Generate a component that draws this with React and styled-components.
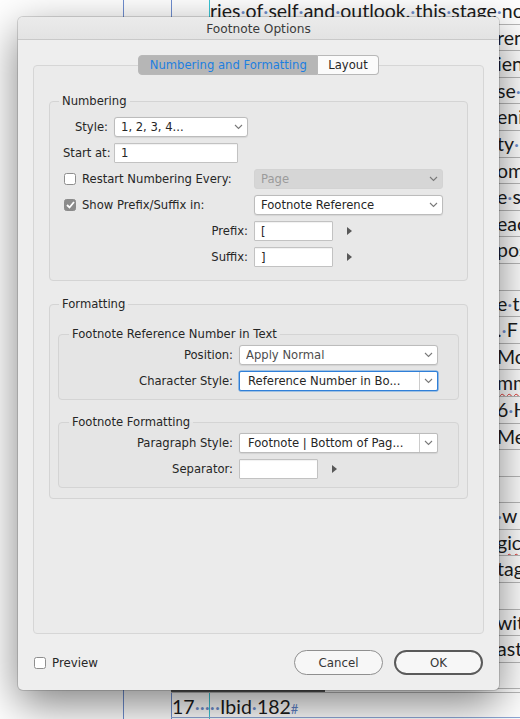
import styled, { createGlobalStyle } from "styled-components";

const GlobalStyle = createGlobalStyle`
  html, body {
    margin: 0;
    padding: 0;
    background: #ffffff;
  }
  body {
    width: 520px;
    height: 719px;
    overflow: hidden;
  }
  * {
    box-sizing: border-box;
  }
`;

const ui = `"DejaVu Sans", "Liberation Sans", sans-serif`;

const Canvas = styled.div`
  position: relative;
  width: 520px;
  height: 719px;
  overflow: hidden;
  background: #ffffff;
`;

const Guide = styled.div`
  position: absolute;
  top: 0;
  bottom: 0;
  left: ${(p) => p.$x}px;
  width: 1px;
  background: ${(p) => p.$color};
`;

const Page = styled.div`
  position: absolute;
  left: 171px;
  top: -2px;
  right: 0;
  bottom: 0;
  display: flex;
  flex-direction: column;
  font-family: Lato, "Noto Sans", sans-serif;
  font-size: 19.5px;
  color: #1c1c1c;
`;

const DocLine = styled.div`
  height: 26.6px;
  line-height: 25px;
  padding-left: ${(p) => p.$lead}px;
  white-space: nowrap;
  overflow: hidden;
  border-bottom: 1px solid #b9b9b9;
`;

const Dot = styled.span`
  color: #6f8fcf;
`;

const Squiggle = styled.span`
  text-decoration: underline wavy #e0332e;
  text-decoration-thickness: 1px;
  text-underline-offset: 3px;
`;

const FootRule = styled.div`
  width: 154px;
  height: 2px;
  margin-top: 1px;
  background: #555555;
`;

const FootLine = styled.div`
  height: 26px;
  line-height: 28px;
  padding-left: 1px;
  white-space: nowrap;
  border-top: 1px solid #b9b9b9;
  border-bottom: 1px solid #8ea7d6;
`;

const Mark = styled.span`
  color: #5f83c9;
  font-size: 13px;
`;

const withDots = (text) =>
  text.split(" ").map((w, i) => (
    <span key={i}>
      {i > 0 && <Dot>·</Dot>}
      {w}
    </span>
  ));

const docLines = [
  { lead: 39, text: "ries of self and outlook, this stage now" },
  { text: "rent" },
  { text: "ient" },
  { text: "se w" },
  { text: "ening" },
  { text: "ty ." },
  { text: "om" },
  { text: "e s" },
  { text: "each" },
  { text: "pos" },
  { text: "" },
  { text: "e t" },
  { text: ". F" },
  { text: "Mo" },
  { text: "mm", wavy: true },
  { text: "6 H" },
  { text: "Me" },
  { text: "" },
  { text: "" },
  { text: " w" },
  { text: "gic", wavy: true },
  { text: "tag" },
  { text: "" },
  { text: "with" },
  { text: "ast" },
  { text: "" },
];

/* ---------- dialog ---------- */

const Dialog = styled.div`
  position: absolute;
  left: 18px;
  top: 17px;
  width: 481px;
  height: 673px;
  display: flex;
  flex-direction: column;
  background: #eeeeee;
  border-radius: 5px;
  overflow: hidden;
  box-shadow: 0 14px 44px rgba(0, 0, 0, 0.5), 0 0 0 1px rgba(0, 0, 0, 0.14);
  font-family: ${ui};
  font-size: 11.6px;
  color: #262626;
`;

const TitleBar = styled.div`
  height: 23px;
  flex: none;
  display: flex;
  align-items: center;
  justify-content: center;
  padding-top: 2px;
  background: linear-gradient(#ebebeb, #e3e3e3);
  border-bottom: 1px solid #c9c9c9;
  font-size: 12.2px;
  color: #3a3a3a;
`;

const Body = styled.div`
  flex: 1;
  display: flex;
  flex-direction: column;
  padding: 25px 15px 0;
`;

const TabBox = styled.div`
  height: 569px;
  display: flex;
  flex-direction: column;
  padding: 0 15px;
  border: 1px solid #d6d6d6;
  border-radius: 4px;
  background: #ebebeb;
`;

const Tabs = styled.div`
  align-self: center;
  display: flex;
  margin-top: -11px;
  height: 20px;
`;

const Tab = styled.div`
  display: flex;
  align-items: center;
  padding: 0 ${(p) => (p.$active ? 10.5 : 10)}px;
  border: 1px solid #b8b8b8;
  border-left-width: ${(p) => (p.$active ? 1 : 0)}px;
  border-radius: ${(p) => (p.$active ? "4px 0 0 4px" : "0 4px 4px 0")};
  background: ${(p) => (p.$active ? "#b6b6b6" : "#fbfbfb")};
  color: ${(p) => (p.$active ? "#1d7fe0" : "#262626")};
`;

const Group = styled.fieldset`
  margin: ${(p) => p.$top || 0}px 0 0;
  padding: ${(p) => p.$pad};
  border: 1px solid #d4d4d4;
  border-radius: 4px;
  background: rgba(0, 0, 0, 0.012);
  display: flex;
  flex-direction: column;
  gap: 6px;
  min-width: 0;
`;

const Legend = styled.legend`
  margin-left: ${(p) => p.$indent ?? 9}px;
  padding: 0 3px;
  line-height: 16px;
  color: #262626;
`;

const Row = styled.div`
  display: flex;
  align-items: center;
  height: 20px;
  gap: 6px;
  padding-left: ${(p) => p.$indent || 0}px;
`;

const Label = styled.div`
  width: ${(p) => p.$w}px;
  flex: none;
  text-align: right;
  white-space: nowrap;
`;

const CheckLabel = styled.label`
  width: ${(p) => p.$w}px;
  flex: none;
  display: flex;
  align-items: center;
  gap: 6px;
  padding-left: 1px;
  white-space: nowrap;
`;

const Box = styled.span`
  width: 12px;
  height: 12px;
  flex: none;
  display: flex;
  align-items: center;
  justify-content: center;
  border: 1px solid ${(p) => (p.$on ? "#8b8b8b" : "#8e8e8e")};
  border-radius: 2.5px;
  background: ${(p) => (p.$on ? "#8b8b8b" : "#ffffff")};
`;

const Field = styled.div`
  width: ${(p) => p.$w}px;
  height: 20px;
  flex: none;
  display: flex;
  align-items: center;
  padding: 0 0 0 6px;
  border: 1px solid ${(p) => (p.$disabled ? "#d3d3d3" : "#bcbcbc")};
  border-radius: 3px;
  background: ${(p) => (p.$disabled ? "#d6d6d6" : "#ffffff")};
  color: ${(p) => (p.$disabled ? "#9b9b9b" : p.$muted ? "#4d4d4d" : "#262626")};
  box-shadow: ${(p) => (p.$disabled ? "none" : "0 0.5px 1px rgba(0,0,0,0.08)")};
  white-space: nowrap;
`;

const Input = styled(Field)`
  border-radius: 1px;
  border-color: #c2c2c2;
  box-shadow: inset 0 1px 1px rgba(0, 0, 0, 0.06);
`;

const FieldText = styled.span`
  flex: 1;
  overflow: hidden;
`;

const Chevron = styled.span`
  width: 18px;
  align-self: stretch;
  display: flex;
  align-items: center;
  justify-content: center;
  border-left: 1px solid ${(p) => (p.$split ? "#cccccc" : "transparent")};
`;

const Combo = styled(Field)`
  border-color: ${(p) => (p.$focus ? "#2f7fd8" : "#bcbcbc")};
  box-shadow: ${(p) => (p.$focus ? "0 0 0 0.6px #5b9be0" : "0 0.5px 1px rgba(0,0,0,0.08)")};
  border-radius: 2px;
  padding-left: 8px;
`;

const Arrow = styled.span`
  display: flex;
  margin-left: 8px;
`;

const Footer = styled.div`
  display: flex;
  align-items: center;
  padding: 16px 1px 0;
  gap: 11px;
`;

const Preview = styled.label`
  display: flex;
  align-items: center;
  gap: 6px;
  margin-right: auto;
  font-size: 11.8px;
`;

const Button = styled.button`
  width: 89px;
  height: 25px;
  border: ${(p) => (p.$default ? "2px solid #5a5a5a" : "1px solid #8f8f8f")};
  border-radius: 13px;
  background: #f7f7f7;
  font-family: ${ui};
  font-size: 11.8px;
  color: #363636;
  padding: 0;
`;

const ChevronIcon = () => (
  <svg width="9" height="6" viewBox="0 0 9 6">
    <polyline points="1,1 4.5,4.5 8,1" fill="none" stroke="#7a7a7a" strokeWidth="1.1" />
  </svg>
);

const TriangleIcon = () => (
  <svg width="5" height="8" viewBox="0 0 5 8">
    <polygon points="0,0 5,4 0,8" fill="#585858" />
  </svg>
);

const CheckIcon = () => (
  <svg width="9" height="8" viewBox="0 0 9 8">
    <polyline points="1,4 3.5,6.5 8,1" fill="none" stroke="#ffffff" strokeWidth="1.8" />
  </svg>
);

function Select({ w, value, disabled, muted }) {
  return (
    <Field $w={w} $disabled={disabled} $muted={muted}>
      <FieldText>{value}</FieldText>
      <Chevron>
        <ChevronIcon />
      </Chevron>
    </Field>
  );
}

function ComboBox({ w, value, focus }) {
  return (
    <Combo $w={w} $focus={focus}>
      <FieldText>{value}</FieldText>
      <Chevron $split>
        <ChevronIcon />
      </Chevron>
    </Combo>
  );
}

function Check({ on }) {
  return <Box $on={on}>{on && <CheckIcon />}</Box>;
}

export default function App() {
  return (
    <Canvas>
      <GlobalStyle />
      <Guide $x={123} $color="#6f8ed0" />
      <Guide $x={171} $color="#6f8ed0" />
      <Guide $x={209} $color="#39c6d6" />

      <Page>
        {docLines.map((line, i) => (
          <DocLine key={i} $lead={line.lead ?? 326}>
            {line.wavy ? <Squiggle>{line.text}</Squiggle> : withDots(line.text)}
          </DocLine>
        ))}
        <FootRule />
        <FootLine>
          17<Dot>·····</Dot>
          {withDots("Ibid 182")}
          <Mark>#</Mark>
        </FootLine>
      </Page>

      <Dialog>
        <TitleBar>Footnote Options</TitleBar>
        <Body>
          <TabBox>
            <Tabs>
              <Tab $active>Numbering and Formatting</Tab>
              <Tab>Layout</Tab>
            </Tabs>

            <Group $top={18} $pad="8px 0 13px">
              <Legend>Numbering</Legend>
              <Row $indent={13}>
                <Label $w={45}>Style:</Label>
                <Select w={134} value="1, 2, 3, 4..." />
              </Row>
              <Row $indent={13}>
                <Label $w={45}>Start at:</Label>
                <Input $w={124}>1</Input>
              </Row>
              <Row $indent={13}>
                <CheckLabel $w={185}>
                  <Check />
                  Restart Numbering Every:
                </CheckLabel>
                <Select w={189} value="Page" disabled />
              </Row>
              <Row $indent={13}>
                <CheckLabel $w={185}>
                  <Check on />
                  Show Prefix/Suffix in:
                </CheckLabel>
                <Select w={189} value="Footnote Reference" />
              </Row>
              <Row $indent={13}>
                <Label $w={185}>Prefix:</Label>
                <Input $w={79}>[</Input>
                <Arrow>
                  <TriangleIcon />
                </Arrow>
              </Row>
              <Row $indent={13}>
                <Label $w={185}>Suffix:</Label>
                <Input $w={79}>]</Input>
                <Arrow>
                  <TriangleIcon />
                </Arrow>
              </Row>
            </Group>

            <Group $top={15} $pad="14px 8px 10px">
              <Legend $indent={1}>Formatting</Legend>
              <Group $pad="3px 0 8px">
                <Legend $indent={10}>Footnote Reference Number in Text</Legend>
                <Row>
                  <Label $w={174}>Position:</Label>
                  <Select w={199} value="Apply Normal" muted />
                </Row>
                <Row>
                  <Label $w={174}>Character Style:</Label>
                  <ComboBox w={199} value="Reference Number in Bo..." focus />
                </Row>
              </Group>
              <Group $top={8} $pad="3px 0 8px">
                <Legend $indent={10}>Footnote Formatting</Legend>
                <Row>
                  <Label $w={174}>Paragraph Style:</Label>
                  <ComboBox w={199} value="Footnote | Bottom of Pag..." />
                </Row>
                <Row>
                  <Label $w={174}>Separator:</Label>
                  <Input $w={79} />
                  <Arrow>
                    <TriangleIcon />
                  </Arrow>
                </Row>
              </Group>
            </Group>
          </TabBox>

          <Footer>
            <Preview>
              <Check />
              Preview
            </Preview>
            <Button>Cancel</Button>
            <Button $default>OK</Button>
          </Footer>
        </Body>
      </Dialog>
    </Canvas>
  );
}
